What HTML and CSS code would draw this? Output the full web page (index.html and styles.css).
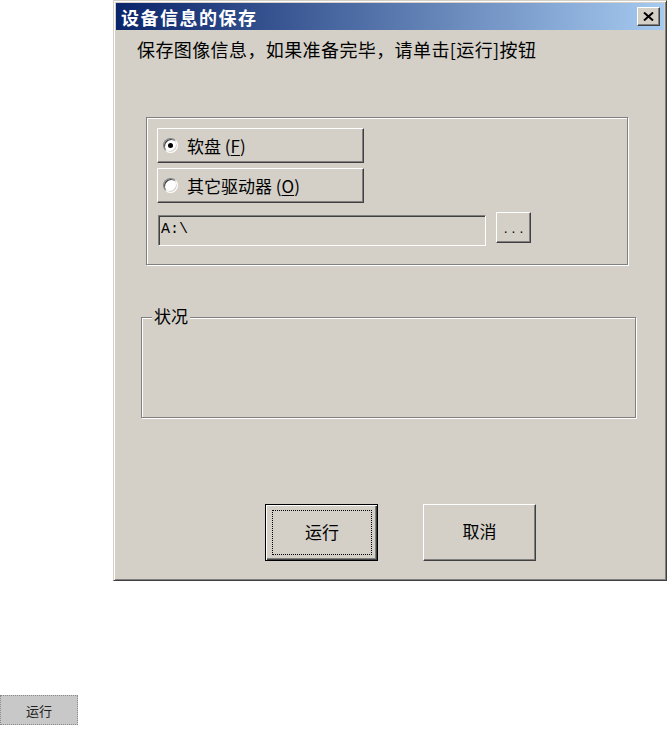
FILE: index.html
```html
<!DOCTYPE html>
<html lang="zh-CN">
<head>
<meta charset="utf-8">
<title>设备信息的保存</title>
<link rel="stylesheet" href="styles.css">
</head>
<body>

<div class="dialog">
	<div class="titlebar">
		<span class="title">设备信息的保存</span>
		<span class="close">
			<svg width="11" height="9" viewBox="0 0 11 9"><path d="M1 0.5 L10 8.5 M10 0.5 L1 8.5" stroke="#000" stroke-width="2" fill="none"/></svg>
		</span>
	</div><!-- titlebar -->

	<div class="client">
		<p class="prompt">保存图像信息，如果准备完毕，请单击[运行]按钮</p>

		<div class="group media">
			<div class="choice checked"><span class="radio"></span>软盘 (<u>F</u>)</div>
			<div class="choice"><span class="radio"></span>其它驱动器 (<u>O</u>)</div>
			<div class="path-row">
				<div class="field">A:\</div>
				<div class="btn browse">...</div>
			</div>
		</div><!-- media -->

		<div class="group status">
			<div class="group-label">状况</div>
		</div><!-- status -->

		<div class="actions">
			<div class="btn push default"><span class="focus">运行</span></div>
			<div class="btn push">取消</div>
		</div>
	</div><!-- client -->
</div><!-- dialog -->

<div class="mini">运行</div>

</body>
</html>
```

FILE: styles.css
```css
body {
	margin: 0;
	background: #fff;
	font-family: "Noto Sans CJK SC", "DejaVu Sans", sans-serif;
	color: #000;
}

.dialog {
	box-sizing: border-box;
	margin-left: 113px;
	width: 554px;
	height: 581px;
	padding: 2px;
	background: #d4d0c8;
	border: 1px solid;
	border-color: #d4d0c8 #404040 #404040 #d4d0c8;
	box-shadow: inset 1px 1px #fff, inset -1px -1px #808080;
}

.titlebar {
	display: flex;
	align-items: center;
	justify-content: space-between;
	height: 27px;
	padding: 0 4px 0 5px;
	background: linear-gradient(to right, #0a246a, #a6caf0);
}

	.titlebar .title {
		color: #fff;
		font-weight: bold;
		font-size: 18px;
		letter-spacing: 1.5px;
		line-height: 1;
	}

	.titlebar .close {
		box-sizing: border-box;
		display: flex;
		align-items: center;
		justify-content: center;
		width: 23px;
		height: 19px;
		background: #d4d0c8;
		border: 1px solid;
		border-color: #fff #404040 #404040 #fff;
		box-shadow: inset -1px -1px #808080;
	}

.client {
	display: flex;
	flex-direction: column;
}

.prompt {
	margin: 9px 0 0 21px;
	font-size: 18px;
	letter-spacing: 0.4px;
	line-height: 20px;
}

/* etched frames */
.group {
	box-sizing: border-box;
	border: 1px solid #808080;
	box-shadow: inset 1px 1px #fff, 1px 1px #fff;
}

.media {
	display: flex;
	flex-direction: column;
	gap: 5px;
	margin: 58px 0 0 30px;
	width: 482px;
	height: 148px;
	padding: 10px 0 0 10px;
}

	.media .choice {
		box-sizing: border-box;
		display: flex;
		align-items: center;
		width: 207px;
		height: 35px;
		font-size: 17px;
		border: 1px solid;
		border-color: #fff #404040 #404040 #fff;
		box-shadow: inset -1px -1px #808080;
	}

	.media .choice u {
		text-underline-offset: 2px;
	}

	.media .radio {
		position: relative;
		box-sizing: border-box;
		width: 15px;
		height: 15px;
		margin: 0 9px 0 5px;
		border-radius: 50%;
		background: #fff;
		border: 1px solid;
		border-color: #808080 #fff #fff #808080;
		box-shadow: inset 1px 1px #404040, inset -1px -1px #d4d0c8;
	}

	.media .checked .radio::after {
		content: "";
		position: absolute;
		left: 4px;
		top: 4px;
		width: 5px;
		height: 5px;
		border-radius: 50%;
		background: #000;
	}

	.path-row {
		display: flex;
		align-items: flex-start;
		margin-top: 7px;
	}

	.path-row .field {
		box-sizing: border-box;
		width: 328px;
		height: 31px;
		margin-left: 1px;
		padding: 4px 0 0 2px;
		font-family: "Liberation Mono", monospace;
		font-size: 15px;
		line-height: 20px;
		border: 1px solid;
		border-color: #808080 #fff #fff #808080;
		box-shadow: inset 1px 1px #404040, inset -1px -1px #d4d0c8;
	}

	.path-row .browse {
		width: 35px;
		height: 31px;
		margin: -3px 0 0 10px;
		font-family: "Liberation Sans", sans-serif;
		font-size: 14px;
		letter-spacing: 4px;
		text-indent: 4px;
	}

.btn {
	box-sizing: border-box;
	display: flex;
	align-items: center;
	justify-content: center;
	background: #d4d0c8;
	border: 1px solid;
	border-color: #fff #404040 #404040 #fff;
	box-shadow: inset -1px -1px #808080;
}

.status {
	margin: 52px 0 0 25px;
	width: 495px;
	height: 101px;
}

	.status .group-label {
		width: fit-content;
		margin: -12px 0 0 10px;
		padding: 0 2px;
		background: #d4d0c8;
		font-size: 17px;
		line-height: 20px;
	}

.actions {
	display: flex;
	gap: 45px;
	margin: 86px 0 0 149px;
}

	.actions .push {
		width: 113px;
		height: 57px;
		font-size: 17px;
		padding-bottom: 4px;
	}

	.actions .default {
		padding: 5px 5px 5px 6px;
		border-color: #000;
		box-shadow: inset 1px 1px #fff, inset -1px -1px #404040, inset -2px -2px #808080;
	}

	.actions .focus {
		display: flex;
		align-items: center;
		justify-content: center;
		align-self: stretch;
		flex: 1;
		padding-bottom: 3px;
		border: 1px dotted #000;
	}

.mini {
	box-sizing: border-box;
	display: flex;
	align-items: center;
	justify-content: center;
	width: 78px;
	height: 30px;
	margin-top: 114px;
	background: #c8c8c8;
	border: 1px dotted #8a8a8a;
	font-size: 13px;
	color: #222;
}
```
